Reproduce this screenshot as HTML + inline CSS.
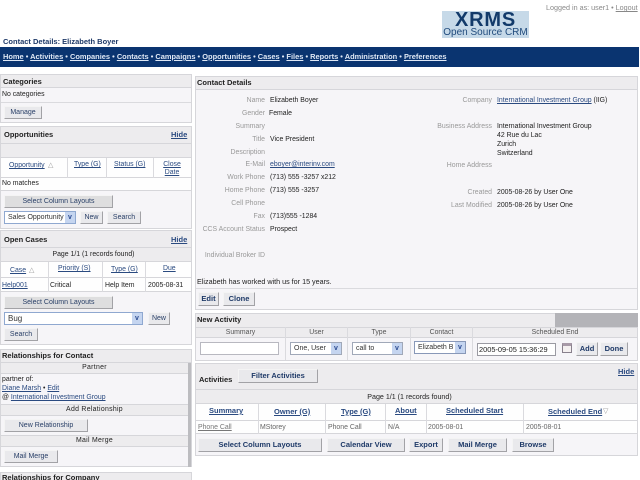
<!DOCTYPE html>
<html><head><meta charset="utf-8"><style>
html,body{margin:0;padding:0;background:#fff;width:640px;height:480px;overflow:hidden}
body{position:relative;font-family:"Liberation Sans",sans-serif;font-size:6.9px;color:#222;filter:blur(.3px)}
div,a,span.t{position:absolute;white-space:nowrap;box-sizing:border-box}
.t{line-height:10px;height:10px}
a,.l{color:#2a4a80;text-decoration:underline}
.b{font-weight:bold;font-size:7.5px}
.h{background:#edecee}
.g{color:#999}
.r{text-align:right}
.c{text-align:center}
.panel{background:#f6f5f8;border:1px solid #d6d6da}
.line{background:#dadade}
.btn{background:#e9e9ec;border:1px solid;border-color:#f4f4f4 #a2a2a6 #a2a2a6 #f4f4f4;text-align:center;color:#2a4068;line-height:11px;font-size:7px}
.btn.bb{font-weight:bold;color:#1f3a68;font-size:7.5px;line-height:12px}
.sel{background:#fff;border:1px solid #8fa8d0;line-height:11px;padding-left:3px;color:#333;font-size:7px;overflow:hidden}
.sel i{position:absolute;right:0;top:0;bottom:0;width:10px;background:#c5d5f0;color:#2a4a90;font-style:normal;text-align:center;font-size:7px;font-weight:bold;line-height:11px}
.w{background:#fefefe}
</style></head><body>

<!-- top -->
<div class="t b" style="left:3px;top:37px;color:#1f3a68">Contact Details: Elizabeth Boyer</div>
<div style="left:442px;top:11px;width:87px;height:27px;background:#c6d9e8"></div>
<div class="t b" style="left:442px;top:11px;width:87px;height:18px;line-height:19px;text-align:center;color:#123a6a;font-size:20px;letter-spacing:.8px">XRMS</div>
<div class="t c" style="left:442px;top:27px;width:87px;height:11px;line-height:11px;color:#1f4a7c;font-size:10px">Open Source CRM</div>
<div class="t" style="left:546px;top:3px;color:#888;font-size:7.2px">Logged in as: user1 • <span style="text-decoration:underline">Logout</span></div>

<!-- nav -->
<div style="left:0;top:47px;width:639px;height:20px;background:#0a3470"></div>
<div class="t b" style="left:3px;top:52px;color:#dfe8f5;font-size:7.45px"><u>Home</u> • <u>Activities</u> • <u>Companies</u> • <u>Contacts</u> • <u>Campaigns</u> • <u>Opportunities</u> • <u>Cases</u> • <u>Files</u> • <u>Reports</u> • <u>Administration</u> • <u>Preferences</u></div>

<!-- Categories -->
<div class="panel" style="left:0;top:74px;width:192px;height:49px"></div>
<div class="h" style="left:1px;top:75px;width:190px;height:13px;border-bottom:1px solid #d6d6da"></div>
<div class="t b" style="left:3px;top:77px">Categories</div>
<div class="t" style="left:2px;top:90px">No categories</div>
<div class="line" style="left:1px;top:102px;width:190px;height:1px"></div>
<div class="btn" style="left:4px;top:106px;width:38px;height:13px">Manage</div>

<!-- Opportunities -->
<div class="panel" style="left:0;top:126px;width:192px;height:103px"></div>
<div class="h" style="left:1px;top:127px;width:190px;height:17px;border-bottom:1px solid #d6d6da"></div>
<div class="t b" style="left:4px;top:130px">Opportunities</div>
<div class="t b l" style="left:171px;top:130px">Hide</div>
<div class="h" style="left:1px;top:144px;width:190px;height:14px;border-bottom:1px solid #d6d6da"></div>
<div class="w" style="left:1px;top:158px;width:190px;height:20px;border-bottom:1px solid #d6d6da"></div>
<div class="line" style="left:67px;top:158px;width:1px;height:20px"></div>
<div class="line" style="left:106px;top:158px;width:1px;height:20px"></div>
<div class="line" style="left:153px;top:158px;width:1px;height:20px"></div>
<div class="t l" style="left:9px;top:161px">Opportunity</div>
<div class="t g" style="left:48px;top:161px">△</div>
<div class="t l" style="left:74px;top:160px">Type (G)</div>
<div class="t l" style="left:114px;top:160px">Status (G)</div>
<div class="t l c" style="left:160px;top:160px;width:24px">Close</div>
<div class="t l c" style="left:160px;top:168px;width:24px">Date</div>
<div class="w" style="left:1px;top:178px;width:190px;height:13px;border-bottom:1px solid #d6d6da"></div>
<div class="t" style="left:2px;top:179px">No matches</div>
<div class="btn" style="left:4px;top:195px;width:109px;height:13px;background:#dededf">Select Column Layouts</div>
<div class="sel" style="left:4px;top:211px;width:72px;height:13px">Sales Opportunity<i>v</i></div>
<div class="btn" style="left:80px;top:211px;width:23px;height:13px">New</div>
<div class="btn" style="left:107px;top:211px;width:34px;height:13px">Search</div>

<!-- Open Cases -->
<div class="panel" style="left:0;top:230px;width:192px;height:115px"></div>
<div class="h" style="left:1px;top:231px;width:190px;height:17px;border-bottom:1px solid #d6d6da"></div>
<div class="t b" style="left:4px;top:235px">Open Cases</div>
<div class="t b l" style="left:171px;top:235px">Hide</div>
<div class="h" style="left:1px;top:248px;width:190px;height:14px;border-bottom:1px solid #d6d6da"></div>
<div class="t c" style="left:1px;top:250px;width:185px">Page 1/1 (1 records found)</div>
<div class="w" style="left:1px;top:262px;width:190px;height:16px;border-bottom:1px solid #d6d6da"></div>
<div class="w" style="left:1px;top:278px;width:190px;height:14px;border-bottom:1px solid #d6d6da"></div>
<div class="line" style="left:48px;top:262px;width:1px;height:30px"></div>
<div class="line" style="left:102px;top:262px;width:1px;height:30px"></div>
<div class="line" style="left:145px;top:262px;width:1px;height:30px"></div>
<div class="t l" style="left:10px;top:266px">Case</div>
<div class="t g" style="left:29px;top:266px">△</div>
<div class="t l" style="left:58px;top:264px">Priority (S)</div>
<div class="t l" style="left:111px;top:265px">Type (G)</div>
<div class="t l" style="left:163px;top:264px">Due</div>
<div class="t l" style="left:2px;top:281px">Help001</div>
<div class="t" style="left:50px;top:281px">Critical</div>
<div class="t" style="left:105px;top:281px">Help Item</div>
<div class="t" style="left:148px;top:281px">2005-08-31</div>
<div class="btn" style="left:4px;top:296px;width:109px;height:13px;background:#dededf">Select Column Layouts</div>
<div class="sel" style="left:4px;top:312px;width:139px;height:13px;line-height:11px;font-size:8px">Bug<i>v</i></div>
<div class="btn" style="left:148px;top:312px;width:22px;height:13px">New</div>
<div class="btn" style="left:4px;top:328px;width:34px;height:13px">Search</div>

<!-- Relationships for Contact -->
<div class="panel" style="left:0;top:349px;width:192px;height:118px"></div>
<div class="h" style="left:1px;top:350px;width:190px;height:13px;border-bottom:1px solid #d6d6da"></div>
<div class="t b" style="left:2px;top:351px">Relationships for Contact</div>
<div class="h" style="left:1px;top:363px;width:187px;height:11px;border-bottom:1px solid #d6d6da"></div>
<div class="t c" style="left:1px;top:363px;width:187px;letter-spacing:.3px">Partner</div>
<div class="t" style="left:2px;top:375px">partner of:</div>
<div class="t" style="left:2px;top:384px"><span class="l">Diane Marsh</span> • <span class="l">Edit</span></div>
<div class="t" style="left:2px;top:393px">@ <span class="l">International Investment Group</span></div>
<div class="h" style="left:1px;top:404px;width:187px;height:12px;border-top:1px solid #d6d6da;border-bottom:1px solid #d6d6da"></div>
<div class="t c" style="left:1px;top:405px;width:187px;letter-spacing:.3px">Add Relationship</div>
<div class="btn" style="left:4px;top:419px;width:84px;height:13px">New Relationship</div>
<div class="h" style="left:1px;top:435px;width:187px;height:12px;border-top:1px solid #d6d6da;border-bottom:1px solid #d6d6da"></div>
<div class="t c" style="left:1px;top:436px;width:187px;letter-spacing:.3px">Mail Merge</div>
<div class="btn" style="left:4px;top:450px;width:54px;height:13px">Mail Merge</div>
<div style="left:188px;top:363px;width:3px;height:104px;background:#bcbcc0"></div>

<!-- Relationships for Company -->
<div class="panel" style="left:0;top:472px;width:192px;height:12px;background:#edecee"></div>
<div class="t b" style="left:2px;top:473px">Relationships for Company</div>

<!-- Contact Details -->
<div class="panel" style="left:195px;top:76px;width:443px;height:234px"></div>
<div class="h" style="left:196px;top:77px;width:441px;height:13px;border-bottom:1px solid #d6d6da"></div>
<div class="t b" style="left:197px;top:78px">Contact Details</div>

<div class="t g r" style="left:195px;top:96px;width:70px">Name</div><div class="t" style="left:270px;top:96px">Elizabeth Boyer</div>
<div class="t g r" style="left:195px;top:109px;width:70px">Gender</div><div class="t" style="left:269px;top:109px">Female</div>
<div class="t g r" style="left:195px;top:122px;width:70px">Summary</div>
<div class="t g r" style="left:195px;top:135px;width:70px">Title</div><div class="t" style="left:270px;top:135px">Vice President</div>
<div class="t g r" style="left:195px;top:148px;width:70px">Description</div>
<div class="t g r" style="left:195px;top:160px;width:70px">E-Mail</div><div class="t l" style="left:270px;top:160px">eboyer@interinv.com</div>
<div class="t g r" style="left:195px;top:173px;width:70px">Work Phone</div><div class="t" style="left:270px;top:173px">(713) 555 -3257 x212</div>
<div class="t g r" style="left:195px;top:186px;width:70px">Home Phone</div><div class="t" style="left:270px;top:186px">(713) 555 -3257</div>
<div class="t g r" style="left:195px;top:199px;width:70px">Cell Phone</div>
<div class="t g r" style="left:195px;top:212px;width:70px">Fax</div><div class="t" style="left:270px;top:212px">(713)555 -1284</div>
<div class="t g r" style="left:195px;top:225px;width:70px">CCS Account Status</div><div class="t" style="left:270px;top:225px">Prospect</div>
<div class="t g r" style="left:195px;top:251px;width:70px">Individual Broker ID</div>

<div class="t g r" style="left:420px;top:96px;width:72px">Company</div><div class="t" style="left:497px;top:96px"><span class="l">International Investment Group</span> (IIG)</div>
<div class="t g r" style="left:420px;top:122px;width:72px">Business Address</div>
<div class="t" style="left:497px;top:122px">International Investment Group</div>
<div class="t" style="left:497px;top:131px">42 Rue du Lac</div>
<div class="t" style="left:497px;top:140px">Zurich</div>
<div class="t" style="left:497px;top:149px">Switzerland</div>
<div class="t g r" style="left:420px;top:161px;width:72px">Home Address</div>
<div class="t g r" style="left:420px;top:188px;width:72px">Created</div><div class="t" style="left:497px;top:188px">2005-08-26 by User One</div>
<div class="t g r" style="left:420px;top:201px;width:72px">Last Modified</div><div class="t" style="left:497px;top:201px">2005-08-26 by User One</div>

<div class="t" style="left:197px;top:277px;font-size:7.2px">Elizabeth has worked with us for 15 years.</div>
<div class="line" style="left:196px;top:288px;width:441px;height:1px"></div>
<div class="btn bb" style="left:198px;top:292px;width:21px;height:14px">Edit</div>
<div class="btn bb" style="left:223px;top:292px;width:32px;height:14px">Clone</div>

<!-- New Activity -->
<div class="panel" style="left:195px;top:313px;width:443px;height:48px"></div>
<div class="h" style="left:196px;top:314px;width:359px;height:13px"></div>
<div style="left:555px;top:313px;width:83px;height:14px;background:#b4b4b8"></div>
<div class="t b" style="left:197px;top:315px">New Activity</div>
<div class="h" style="left:196px;top:327px;width:441px;height:11px;border-top:1px solid #d6d6da;border-bottom:1px solid #d6d6da"></div>
<div class="line" style="left:285px;top:327px;width:1px;height:33px"></div>
<div class="line" style="left:347px;top:327px;width:1px;height:33px"></div>
<div class="line" style="left:410px;top:327px;width:1px;height:33px"></div>
<div class="line" style="left:472px;top:327px;width:1px;height:33px"></div>
<div class="t c" style="left:196px;top:328px;width:89px;color:#555">Summary</div>
<div class="t c" style="left:286px;top:328px;width:61px;color:#555">User</div>
<div class="t c" style="left:348px;top:328px;width:62px;color:#555">Type</div>
<div class="t c" style="left:411px;top:328px;width:61px;color:#555">Contact</div>
<div class="t c" style="left:473px;top:328px;width:164px;color:#555">Scheduled End</div>
<div style="left:200px;top:342px;width:79px;height:13px;background:#fff;border:1px solid #b8b8c0"></div>
<div class="sel" style="left:290px;top:342px;width:52px;height:13px;border-color:#a0a8b8">One, User<i>v</i></div>
<div class="sel" style="left:352px;top:342px;width:51px;height:13px;border-color:#a0a8b8">call to<i>v</i></div>
<div class="sel" style="left:414px;top:341px;width:52px;height:13px;border-color:#8898b8">Elizabeth B<i>v</i></div>
<div style="left:477px;top:343px;width:79px;height:13px;background:#fff;border:1px solid #9a9aa2;padding-left:1px;line-height:11px;font-size:7.4px">2005-09-05 15:36:29</div>
<div style="left:562px;top:343px;width:10px;height:10px;background:#f4f0f0;border:1px solid #88808c;border-top:3px solid #a89aa8"></div>
<div class="btn bb" style="left:576px;top:342px;width:22px;height:14px">Add</div>
<div class="btn bb" style="left:600px;top:342px;width:28px;height:14px">Done</div>

<!-- Activities -->
<div class="panel" style="left:195px;top:363px;width:443px;height:93px"></div>
<div class="h" style="left:196px;top:364px;width:441px;height:26px;border-bottom:1px solid #d6d6da"></div>
<div class="t b" style="left:199px;top:375px">Activities</div>
<div class="btn bb" style="left:238px;top:369px;width:80px;height:14px">Filter Activities</div>
<div class="t b l" style="left:618px;top:367px">Hide</div>
<div class="h" style="left:196px;top:390px;width:441px;height:14px;border-bottom:1px solid #d6d6da"></div>
<div class="t c" style="left:196px;top:392px;width:427px;font-size:7.1px">Page 1/1 (1 records found)</div>
<div class="w" style="left:196px;top:404px;width:441px;height:17px;border-bottom:1px solid #d6d6da"></div>
<div class="w" style="left:196px;top:421px;width:441px;height:13px;border-bottom:1px solid #d6d6da"></div>
<div class="line" style="left:258px;top:404px;width:1px;height:30px"></div>
<div class="line" style="left:325px;top:404px;width:1px;height:30px"></div>
<div class="line" style="left:385px;top:404px;width:1px;height:30px"></div>
<div class="line" style="left:426px;top:404px;width:1px;height:30px"></div>
<div class="line" style="left:523px;top:404px;width:1px;height:30px"></div>
<div class="t b l" style="left:209px;top:406px">Summary</div>
<div class="t b l" style="left:274px;top:407px">Owner (G)</div>
<div class="t b l" style="left:341px;top:407px">Type (G)</div>
<div class="t b l" style="left:395px;top:406px">About</div>
<div class="t b l" style="left:446px;top:406px">Scheduled Start</div>
<div class="t b l" style="left:548px;top:407px">Scheduled End</div>
<div class="t g" style="left:603px;top:407px">▽</div>
<div class="t l" style="left:198px;top:423px;color:#777">Phone Call</div>
<div class="t" style="left:260px;top:423px;color:#666">MStorey</div>
<div class="t" style="left:328px;top:423px;color:#666">Phone Call</div>
<div class="t" style="left:388px;top:423px;color:#666">N/A</div>
<div class="t" style="left:428px;top:423px;color:#666">2005-08-01</div>
<div class="t" style="left:526px;top:423px;color:#666">2005-08-01</div>
<div class="btn bb" style="left:198px;top:438px;width:124px;height:14px">Select Column Layouts</div>
<div class="btn bb" style="left:327px;top:438px;width:78px;height:14px">Calendar View</div>
<div class="btn bb" style="left:409px;top:438px;width:34px;height:14px">Export</div>
<div class="btn bb" style="left:448px;top:438px;width:59px;height:14px">Mail Merge</div>
<div class="btn bb" style="left:512px;top:438px;width:42px;height:14px">Browse</div>

</body></html>
